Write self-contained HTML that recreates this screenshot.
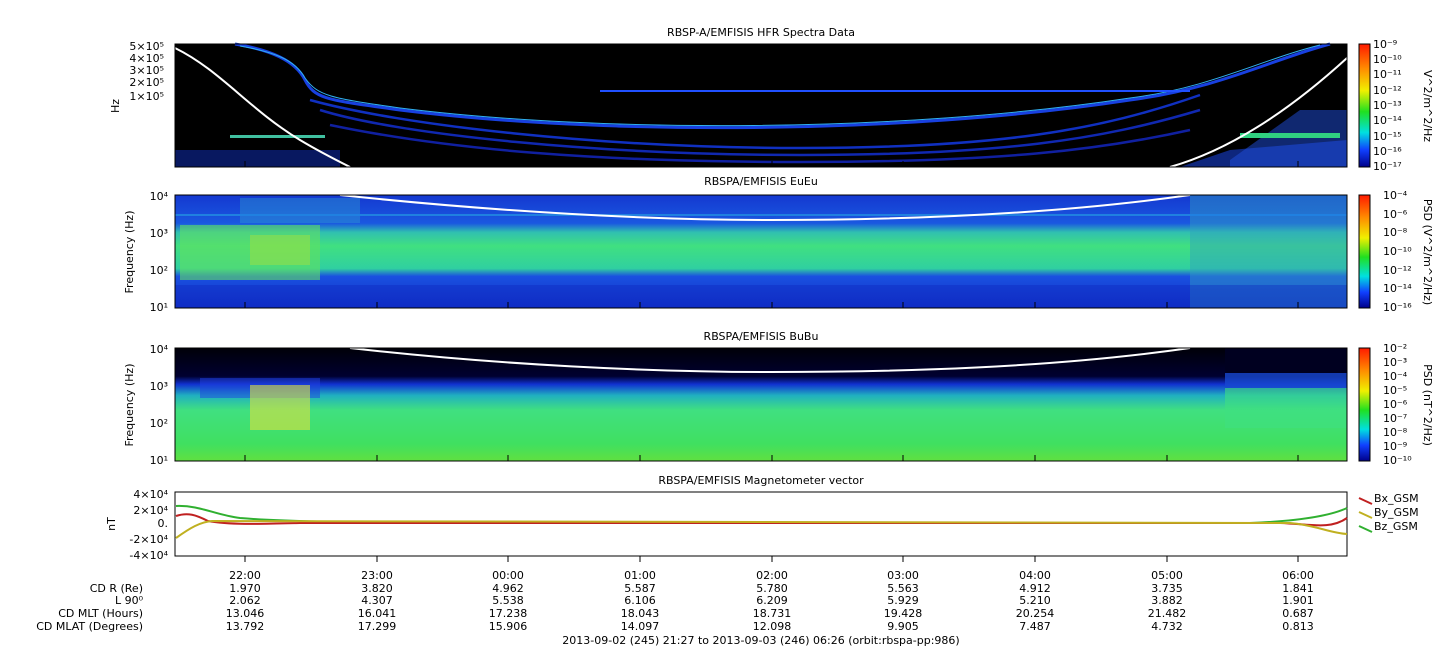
<!DOCTYPE html>
<html><head><meta charset="utf-8"><style>
html,body{margin:0;padding:0;background:#fff;}
svg text{font-family:"DejaVu Sans","Liberation Sans",sans-serif;font-size:11px;fill:#000;}
</style></head><body>
<svg width="1447" height="658" xmlns="http://www.w3.org/2000/svg">
<defs>
<linearGradient id="cb" x1="0" y1="0" x2="0" y2="1">
<stop offset="0" stop-color="#ff1a00"/><stop offset="0.2" stop-color="#ff8c00"/>
<stop offset="0.38" stop-color="#f0f000"/><stop offset="0.55" stop-color="#20e020"/>
<stop offset="0.72" stop-color="#00e0e0"/><stop offset="0.86" stop-color="#1040ff"/>
<stop offset="1" stop-color="#00008a"/></linearGradient>
<linearGradient id="p2" x1="0" y1="0" x2="0" y2="1">
<stop offset="0" stop-color="#1438d0"/><stop offset="0.25" stop-color="#1a58e0"/>
<stop offset="0.33" stop-color="#30c0b0"/><stop offset="0.45" stop-color="#40e080"/>
<stop offset="0.65" stop-color="#30d0a0"/><stop offset="0.72" stop-color="#1a50e0"/>
<stop offset="1" stop-color="#1030c8"/></linearGradient>
<linearGradient id="p3" x1="0" y1="0" x2="0" y2="1">
<stop offset="0" stop-color="#000008"/><stop offset="0.25" stop-color="#000030"/>
<stop offset="0.32" stop-color="#1030d0"/><stop offset="0.42" stop-color="#20b0c0"/>
<stop offset="0.55" stop-color="#40e080"/><stop offset="0.85" stop-color="#40e060"/>
<stop offset="1" stop-color="#60e040"/></linearGradient>
</defs>

<!-- Panel 1 -->
<text x="761" y="36" text-anchor="middle">RBSP-A/EMFISIS  HFR Spectra Data</text>
<rect x="175" y="44" width="1172" height="123" fill="#000"/>
<path d="M175 150 L340 150 L340 167 L175 167Z" fill="#1030c0" opacity="0.5"/>
<path d="M1180 167 L1230 150 L1347 140 L1347 167Z" fill="#1840d0" opacity="0.6"/>
<path d="M1230 160 L1300 110 L1347 110 L1347 167 L1230 167Z" fill="#2050e0" opacity="0.5"/>
<rect x="1240" y="133" width="100" height="5" fill="#30d080"/>
<rect x="230" y="135" width="95" height="3" fill="#40c0a0"/>
<path d="M235 44 C270 50 295 60 305 80 C315 100 330 100 400 110 C600 135 900 135 1130 100 C1220 88 1270 60 1330 44" stroke="#1840e0" stroke-width="3" fill="none"/>
<path d="M240 46 C275 52 295 60 305 78 C318 96 330 98 400 108 C600 133 900 133 1130 98 C1210 88 1260 60 1320 45" stroke="#30b0f0" stroke-width="1" fill="none"/>
<path d="M310 100 C400 125 600 148 800 148 C1000 148 1100 130 1200 95" stroke="#1030c0" stroke-width="2.5" fill="none"/>
<path d="M320 110 C400 135 600 155 800 155 C1000 155 1100 140 1200 110" stroke="#1028b0" stroke-width="2.5" fill="none"/>
<path d="M330 125 C450 150 600 162 800 162 C1000 162 1100 150 1190 130" stroke="#1020a0" stroke-width="2.5" fill="none"/>
<rect x="600" y="90" width="590" height="2" fill="#2050ff"/>
<path d="M175 48 C220 70 250 110 300 140 C320 152 340 162 350 167" stroke="#fff" stroke-width="2" fill="none"/>
<path d="M1170 167 C1230 150 1290 110 1347 58" stroke="#fff" stroke-width="2" fill="none"/>
<rect x="175" y="44" width="1172" height="123" fill="none" stroke="#000"/>
<text x="164" y="50" text-anchor="end" font-size="10">5×10⁵</text>
<text x="164" y="62" text-anchor="end" font-size="10">4×10⁵</text>
<text x="164" y="74" text-anchor="end" font-size="10">3×10⁵</text>
<text x="164" y="86" text-anchor="end" font-size="10">2×10⁵</text>
<text x="164" y="100" text-anchor="end" font-size="10">1×10⁵</text>
<text transform="translate(119,106) rotate(-90)" text-anchor="middle">Hz</text>
<rect x="1359" y="44" width="11" height="123" fill="url(#cb)"/>
<rect x="1359" y="44" width="11" height="123" fill="none" stroke="#000"/>
<g font-size="10">
<text x="1373" y="48">10⁻⁹</text><text x="1373" y="63">10⁻¹⁰</text><text x="1373" y="78">10⁻¹¹</text>
<text x="1373" y="94">10⁻¹²</text><text x="1373" y="109">10⁻¹³</text><text x="1373" y="124">10⁻¹⁴</text>
<text x="1373" y="140">10⁻¹⁵</text><text x="1373" y="155">10⁻¹⁶</text><text x="1373" y="170">10⁻¹⁷</text></g>
<text transform="translate(1424,106) rotate(90)" text-anchor="middle">V^2/m^2/Hz</text>

<!-- Panel 2 -->
<text x="761" y="185" text-anchor="middle">RBSPA/EMFISIS  EuEu</text>
<rect x="175" y="195" width="1172" height="113" fill="url(#p2)"/>
<rect x="180" y="225" width="140" height="55" fill="#60e060" opacity="0.6"/>
<rect x="250" y="235" width="60" height="30" fill="#a0e040" opacity="0.5"/>
<rect x="240" y="198" width="120" height="25" fill="#30a0d0" opacity="0.4"/>
<rect x="1190" y="195" width="157" height="113" fill="#30a0c0" opacity="0.45"/>
<rect x="175" y="285" width="1172" height="23" fill="#1028c0" opacity="0.4"/>
<rect x="175" y="214" width="1172" height="2" fill="#2080e0"/>
<path d="M340 195 C500 212 650 220 770 220 C900 220 1050 215 1190 195" stroke="#fff" stroke-width="2" fill="none"/>
<rect x="175" y="195" width="1172" height="113" fill="none" stroke="#000"/>
<text x="168" y="200" text-anchor="end" font-size="10">10⁴</text>
<text x="168" y="237" text-anchor="end" font-size="10">10³</text>
<text x="168" y="274" text-anchor="end" font-size="10">10²</text>
<text x="168" y="311" text-anchor="end" font-size="10">10¹</text>
<text transform="translate(133,252) rotate(-90)" text-anchor="middle">Frequency (Hz)</text>
<rect x="1359" y="195" width="11" height="113" fill="url(#cb)"/>
<rect x="1359" y="195" width="11" height="113" fill="none" stroke="#000"/>
<g font-size="10">
<text x="1383" y="199">10⁻⁴</text><text x="1383" y="218">10⁻⁶</text><text x="1383" y="236">10⁻⁸</text>
<text x="1383" y="255">10⁻¹⁰</text><text x="1383" y="274">10⁻¹²</text><text x="1383" y="292">10⁻¹⁴</text><text x="1383" y="311">10⁻¹⁶</text></g>
<text transform="translate(1424,252) rotate(90)" text-anchor="middle">PSD (V^2/m^2/Hz)</text>

<!-- Panel 3 -->
<text x="761" y="340" text-anchor="middle">RBSPA/EMFISIS  BuBu</text>
<rect x="175" y="348" width="1172" height="113" fill="url(#p3)"/>
<rect x="200" y="378" width="120" height="20" fill="#2040e0" opacity="0.5"/>
<rect x="250" y="385" width="60" height="45" fill="#e0e040" opacity="0.6"/>
<rect x="1225" y="348" width="122" height="25" fill="#000020"/>
<rect x="1225" y="373" width="122" height="15" fill="#1848d0" opacity="0.8"/>
<rect x="1225" y="388" width="122" height="40" fill="#40e080" opacity="0.6"/>
<path d="M350 348 C500 365 650 372 770 372 C900 372 1050 368 1190 348" stroke="#fff" stroke-width="2" fill="none"/>
<rect x="175" y="348" width="1172" height="113" fill="none" stroke="#000"/>
<text x="168" y="353" text-anchor="end" font-size="10">10⁴</text>
<text x="168" y="390" text-anchor="end" font-size="10">10³</text>
<text x="168" y="427" text-anchor="end" font-size="10">10²</text>
<text x="168" y="464" text-anchor="end" font-size="10">10¹</text>
<text transform="translate(133,405) rotate(-90)" text-anchor="middle">Frequency (Hz)</text>
<rect x="1359" y="348" width="11" height="113" fill="url(#cb)"/>
<rect x="1359" y="348" width="11" height="113" fill="none" stroke="#000"/>
<g font-size="10">
<text x="1383" y="352">10⁻²</text><text x="1383" y="366">10⁻³</text><text x="1383" y="380">10⁻⁴</text>
<text x="1383" y="394">10⁻⁵</text><text x="1383" y="408">10⁻⁶</text><text x="1383" y="422">10⁻⁷</text>
<text x="1383" y="436">10⁻⁸</text><text x="1383" y="450">10⁻⁹</text><text x="1383" y="464">10⁻¹⁰</text></g>
<text transform="translate(1424,405) rotate(90)" text-anchor="middle">PSD (nT^2/Hz)</text>

<!-- Panel 4 -->
<text x="761" y="484" text-anchor="middle">RBSPA/EMFISIS  Magnetometer vector</text>
<rect x="175" y="492" width="1172" height="64" fill="#fff" stroke="#000"/>
<path d="M176 506 C200 505 215 515 240 518 C300 523 400 523 600 523 L1250 523 C1300 521 1330 516 1347 508" stroke="#30b030" stroke-width="2" fill="none"/>
<path d="M176 516 C188 512 196 515 208 521 C230 525 260 524 300 523 L1280 523 C1310 524 1330 530 1347 518" stroke="#c02020" stroke-width="2" fill="none"/>
<path d="M176 538 C190 528 200 522 212 521 L1290 523 C1315 525 1330 533 1347 534" stroke="#c0b020" stroke-width="2" fill="none"/>
<text x="168" y="498" text-anchor="end" font-size="10">4×10⁴</text>
<text x="168" y="514" text-anchor="end" font-size="10">2×10⁴</text>
<text x="168" y="527" text-anchor="end" font-size="10">0.</text>
<text x="168" y="543" text-anchor="end" font-size="10">-2×10⁴</text>
<text x="168" y="559" text-anchor="end" font-size="10">-4×10⁴</text>
<text transform="translate(115,524) rotate(-90)" text-anchor="middle">nT</text>
<line x1="1359" y1="498" x2="1372" y2="504" stroke="#c02020" stroke-width="2"/><text x="1374" y="502">Bx_GSM</text>
<line x1="1359" y1="512" x2="1372" y2="518" stroke="#c0b020" stroke-width="2"/><text x="1374" y="516">By_GSM</text>
<line x1="1359" y1="526" x2="1372" y2="532" stroke="#30b030" stroke-width="2"/><text x="1374" y="530">Bz_GSM</text>

<!-- ticks -->
<g stroke="#000">
<path d="M245 167v-6M377 167v-6M508 167v-6M640 167v-6M772 167v-6M903 167v-6M1035 167v-6M1167 167v-6M1298 167v-6"/>
<path d="M245 308v-6M377 308v-6M508 308v-6M640 308v-6M772 308v-6M903 308v-6M1035 308v-6M1167 308v-6M1298 308v-6"/>
<path d="M245 461v-6M377 461v-6M508 461v-6M640 461v-6M772 461v-6M903 461v-6M1035 461v-6M1167 461v-6M1298 461v-6"/>
<path d="M245 556v6M377 556v6M508 556v6M640 556v6M772 556v6M903 556v6M1035 556v6M1167 556v6M1298 556v6"/>
</g>

<!-- bottom table -->
<g text-anchor="end">
<text x="143" y="592">CD R (Re)</text><text x="143" y="604">L 90⁰</text>
<text x="143" y="617">CD MLT (Hours)</text><text x="143" y="630">CD MLAT (Degrees)</text></g>
<g text-anchor="middle">
<text x="245" y="579">22:00</text><text x="245" y="592">1.970</text><text x="245" y="604">2.062</text><text x="245" y="617">13.046</text><text x="245" y="630">13.792</text>
<text x="377" y="579">23:00</text><text x="377" y="592">3.820</text><text x="377" y="604">4.307</text><text x="377" y="617">16.041</text><text x="377" y="630">17.299</text>
<text x="508" y="579">00:00</text><text x="508" y="592">4.962</text><text x="508" y="604">5.538</text><text x="508" y="617">17.238</text><text x="508" y="630">15.906</text>
<text x="640" y="579">01:00</text><text x="640" y="592">5.587</text><text x="640" y="604">6.106</text><text x="640" y="617">18.043</text><text x="640" y="630">14.097</text>
<text x="772" y="579">02:00</text><text x="772" y="592">5.780</text><text x="772" y="604">6.209</text><text x="772" y="617">18.731</text><text x="772" y="630">12.098</text>
<text x="903" y="579">03:00</text><text x="903" y="592">5.563</text><text x="903" y="604">5.929</text><text x="903" y="617">19.428</text><text x="903" y="630">9.905</text>
<text x="1035" y="579">04:00</text><text x="1035" y="592">4.912</text><text x="1035" y="604">5.210</text><text x="1035" y="617">20.254</text><text x="1035" y="630">7.487</text>
<text x="1167" y="579">05:00</text><text x="1167" y="592">3.735</text><text x="1167" y="604">3.882</text><text x="1167" y="617">21.482</text><text x="1167" y="630">4.732</text>
<text x="1298" y="579">06:00</text><text x="1298" y="592">1.841</text><text x="1298" y="604">1.901</text><text x="1298" y="617">0.687</text><text x="1298" y="630">0.813</text>
<text x="761" y="644">2013-09-02 (245) 21:27 to 2013-09-03 (246) 06:26 (orbit:rbspa-pp:986)</text>
</g>
</svg>
</body></html>
